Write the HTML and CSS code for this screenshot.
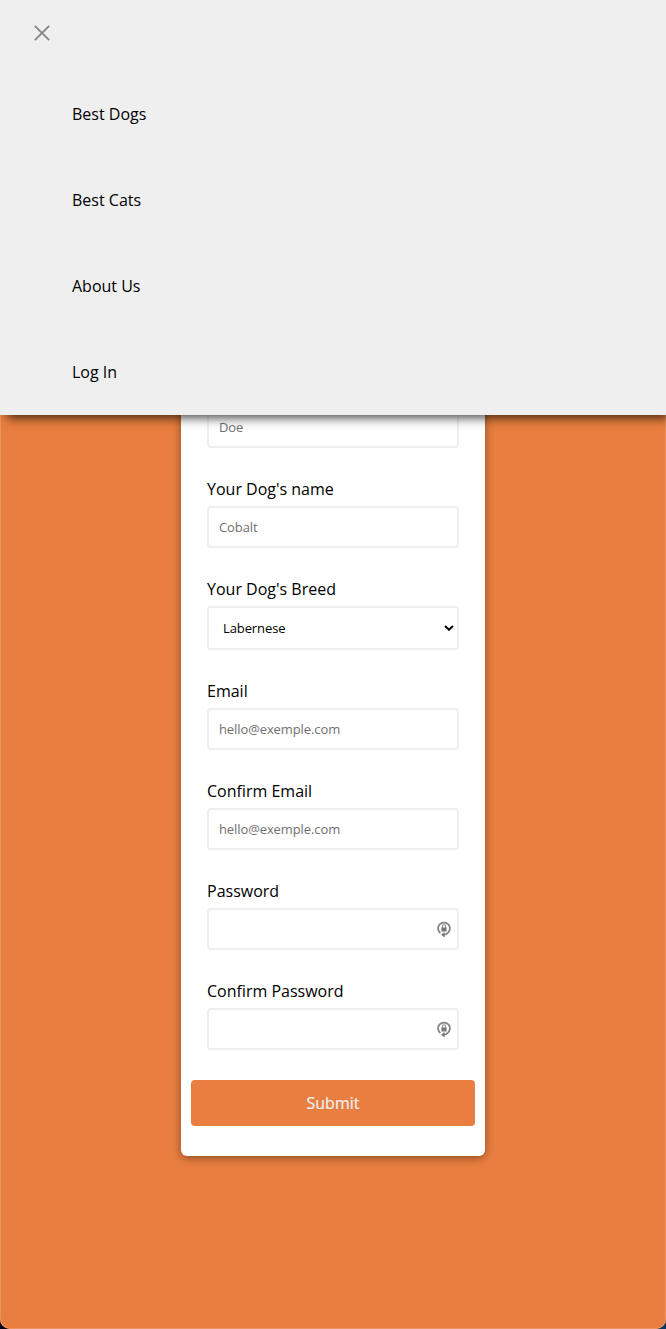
FILE: index.html
```html
<!DOCTYPE html>
<html lang="en">
<head>
<meta charset="utf-8">
<title>Best Dogs</title>
<link rel="stylesheet" href="styles.css">
</head>
<body>
<div class="window">
  <nav class="menu">
    <button class="close" aria-label="Close menu">
      <svg width="16" height="16" viewBox="0 0 16 16"><path d="M.8.8l14.4 14.4M15.2.8L.8 15.2" fill="none" stroke="#858585" stroke-width="1.8"/></svg>
    </button>
    <a class="link">Best Dogs</a>
    <a class="link">Best Cats</a>
    <a class="link">About Us</a>
    <a class="link">Log In</a>
  </nav>
  <form class="card">
    <div class="field"><input class="input" placeholder="Doe"></div>
    <div class="field"><label class="label">Your Dog's name</label><input class="input" placeholder="Cobalt"></div>
    <div class="field"><label class="label">Your Dog's Breed</label>
      <div class="input select"><span>Labernese</span>
        <svg width="10" height="6" viewBox="0 0 10 6"><path d="M1 .9l4 3.8L9 .9" fill="none" stroke="#000" stroke-width="2"/></svg>
      </div>
    </div>
    <div class="field"><label class="label">Email</label><input class="input" placeholder="hello@exemple.com"></div>
    <div class="field"><label class="label">Confirm Email</label><input class="input" placeholder="hello@exemple.com"></div>
    <div class="field"><label class="label">Password</label>
      <div class="input password"><svg width="14" height="17" viewBox="0 0 14 17"><path d="M3.4 12.1A5.9 5.9 0 1 1 10.6 12.1Q9.3 13.6 7 13.7" fill="none" stroke="#858585" stroke-width="1.8"/><path d="M7.6 11v5.6L4 13.8z" fill="#777"/><path d="M5.4 7V5.3a1.6 1.6 0 0 1 3.2 0V7" fill="none" stroke="#858585" stroke-width="1.1"/><path d="M4.4 6.5h5.2v4H4.4z" fill="#777"/></svg></div>
    </div>
    <div class="field"><label class="label">Confirm Password</label>
      <div class="input password"><svg width="14" height="17" viewBox="0 0 14 17"><path d="M3.4 12.1A5.9 5.9 0 1 1 10.6 12.1Q9.3 13.6 7 13.7" fill="none" stroke="#858585" stroke-width="1.8"/><path d="M7.6 11v5.6L4 13.8z" fill="#777"/><path d="M5.4 7V5.3a1.6 1.6 0 0 1 3.2 0V7" fill="none" stroke="#858585" stroke-width="1.1"/><path d="M4.4 6.5h5.2v4H4.4z" fill="#777"/></svg></div>
    </div>
    <button class="submit" type="button">Submit</button>
  </form>
</div>
</body>
</html>
```
FILE: styles.css
```css
* { box-sizing: border-box; }
body {
  margin: 0;
  background: linear-gradient(90deg, #080616 50%, #063763 50%);
  font: 16px/22px "Open Sans", sans-serif;
  color: #000;
}
.window {
  height: 1329px;
  overflow: hidden;
  display: flex;
  flex-direction: column;
  align-items: center;
  background: #e87e3f;
  border-radius: 0 0 10px 10px;
  box-shadow: inset 0 0 0 1px #eb945f;
}
.menu {
  position: relative;
  z-index: 1;
  flex: none;
  width: 100%;
  height: 415px;
  display: flex;
  flex-direction: column;
  background: #efefef;
  box-shadow: 5px 5px 10px -2px rgba(0, 0, 0, .7);
}
.close {
  width: 66px;
  height: 71px;
  margin-left: 9px;
  padding: 25px 25px 30px;
  border: 0;
  background: none;
}
.close svg { display: block; }
.link { padding: 32px 72px; }
.card {
  flex: none;
  width: 304px;
  margin-top: -40px;
  padding: 31px 10px 30px;
  display: flex;
  flex-direction: column;
  gap: 30px;
  background: #fff;
  border-radius: 6px;
  box-shadow: 0 2px 8px rgba(0, 0, 0, .4);
}
.field {
  display: flex;
  flex-direction: column;
  gap: 6px;
  padding: 0 16px;
}
.input {
  width: 252px;
  height: 42px;
  padding: 0 10px;
  border: 2px solid #efefef;
  border-radius: 4px;
  background: #fff;
  font: 13px/18px "Open Sans", sans-serif;
  letter-spacing: -.1px;
}
.input::placeholder { color: #707070; opacity: 1; }
.select, .password {
  display: flex;
  align-items: center;
}
.select {
  height: 44px;
  padding: 0 3px 0 14px;
  justify-content: space-between;
}
.password {
  justify-content: flex-end;
  padding-right: 6px;
}
.submit {
  height: 46px;
  padding: 0;
  border: 0;
  border-radius: 4px;
  background: #e87e3f;
  color: #efefef;
  font: 16px/22px "Open Sans", sans-serif;
  -webkit-text-stroke: .2px #efefef;
}
```
